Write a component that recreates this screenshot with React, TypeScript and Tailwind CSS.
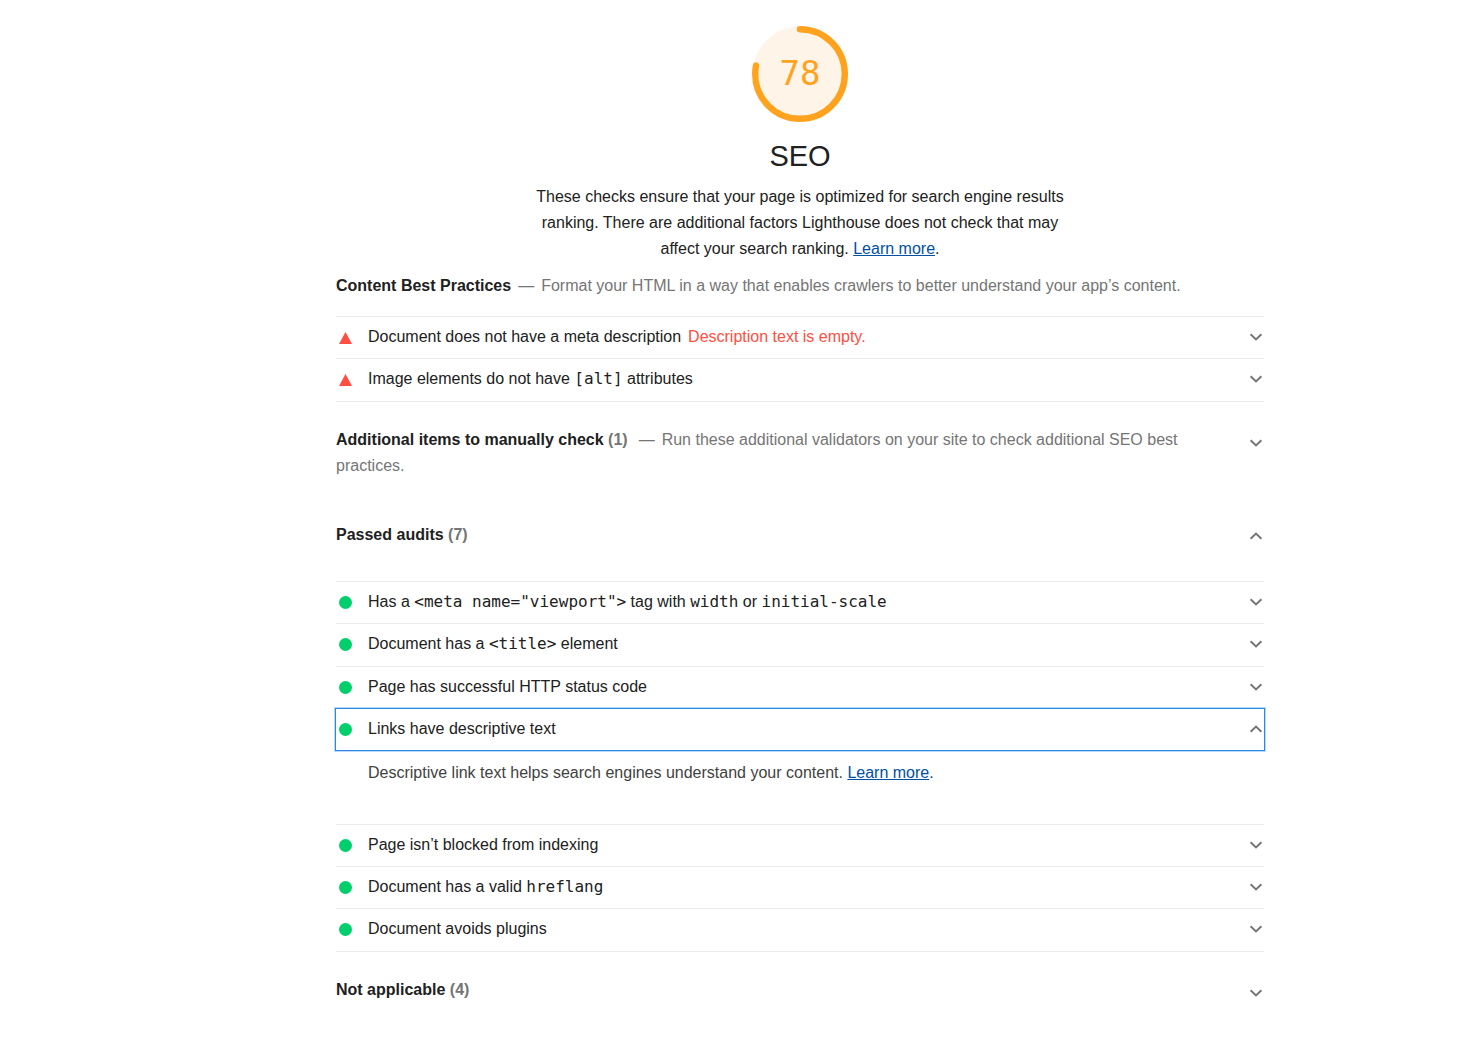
import { useState, type ReactNode } from "react";

function Chevron({ up }: { up: boolean }) {
  return (
    <svg
      viewBox="0 0 14 10"
      className={`h-[10px] w-[14px] shrink-0 ${up ? "rotate-180" : ""}`}
      fill="none"
      stroke="#757575"
      strokeWidth="2"
      aria-hidden="true"
    >
      <path d="M1.6 2.2 L7 7.4 L12.4 2.2" />
    </svg>
  );
}

function StatusMark({ pass }: { pass: boolean }) {
  return pass ? (
    <span className="ml-[3px] mr-4 mt-px size-[13px] shrink-0 rounded-full bg-[#00cf6b]" />
  ) : (
    <svg viewBox="0 0 13 12" className="ml-[3px] mr-4 mt-[2px] h-3 w-[13px] shrink-0" aria-hidden="true">
      <path d="M6.5 0 L13 12 L0 12 Z" fill="#ff4e42" />
    </svg>
  );
}

function Code({ children }: { children: ReactNode }) {
  return <code className="font-['DejaVu_Sans_Mono',monospace] text-base leading-none">{children}</code>;
}

function LearnMore() {
  return (
    <a href="#learn-more" className="text-[#0050a4] underline">
      Learn more
    </a>
  );
}

type AuditProps = {
  title: ReactNode;
  pass?: boolean;
  note?: string;
  tall?: boolean;
  selected?: boolean;
  details?: ReactNode;
};

function Audit({ title, pass = false, note, tall = false, selected = false, details }: AuditProps) {
  const [open, setOpen] = useState(selected);
  return (
    <li className="border-t border-[#ebebeb] last:border-b">
      <button
        type="button"
        aria-expanded={open}
        onClick={() => setOpen(!open)}
        className={`flex w-full items-center pb-[2px] pr-px text-left ${tall ? "min-h-[42px]" : "min-h-[41px]"} ${
          selected ? "shadow-[0_0_0_2px_#b9d9fb] outline outline-[#2b87e8]" : ""
        }`}
      >
        <StatusMark pass={pass} />
        <span className="flex-1">
          {title}
          {note && <span className="ml-[7px] text-[#ff4e42]">{note}</span>}
        </span>
        <Chevron up={open} />
      </button>
      {open && details && <p className="pb-[38px] pl-8 pt-[10px] text-[#424242]">{details}</p>}
    </li>
  );
}

type ClumpProps = { title: string; count: number; description?: string; open?: boolean };

function ClumpHeader({ title, count, description, open = false }: ClumpProps) {
  return (
    <button type="button" aria-expanded={open} className="flex w-full items-start justify-between pr-px text-left">
      <span className="max-w-[860px]">
        <b>{title}</b> <b className="text-[#757575]">({count})</b>
        {description && (
          <span className="text-[#757575]">
            <span className="ml-[11px] mr-[7px]">—</span>
            {description}
          </span>
        )}
      </span>
      <span className={`flex ${open ? "mt-[9px]" : "mt-[11px]"}`}>
        <Chevron up={open} />
      </span>
    </button>
  );
}

function Gauge({ score }: { score: number }) {
  return (
    <div className="grid size-24 place-items-center" role="img" aria-label={`SEO score ${score}`}>
      <svg viewBox="0 0 96 96" className="col-start-1 row-start-1 size-24">
        <circle cx="48" cy="48" r="47.5" fill="#fff4e8" />
        <circle
          cx="48"
          cy="48"
          r="44.8"
          fill="none"
          stroke="#ffa31f"
          strokeWidth="6.4"
          strokeLinecap="round"
          pathLength="100"
          strokeDasharray={`${score} 100`}
          transform="rotate(-90 48 48)"
        />
      </svg>
      <span className="col-start-1 row-start-1 pb-[2px] font-['DejaVu_Sans_Mono',monospace] text-[34px] leading-10 text-[#ffa31f]">
        {score}
      </span>
    </div>
  );
}

export default function App() {
  return (
    <div className="min-h-screen bg-white pl-[126px] font-['Liberation_Sans',Arial,sans-serif] text-base leading-[26px] text-[#212121]">
      <main className="mx-auto max-w-[928px] pb-12 pt-[26px]">
        <header className="flex flex-col items-center">
          <Gauge score={78} />
          <h1 className="mt-3 text-[29px] leading-[44px]">SEO</h1>
          <p className="mt-[6px] max-w-[540px] text-center">
            These checks ensure that your page is optimized for search engine results ranking. There are additional
            factors Lighthouse does not check that may affect your search ranking. <LearnMore />.
          </p>
        </header>

        <section className="mt-[11px]">
          <h2>
            <b>Content Best Practices</b>
            <span className="text-[#757575]">
              <span className="mx-[7px]">—</span>
              Format your HTML in a way that enables crawlers to better understand your app’s content.
            </span>
          </h2>
          <ul className="mt-[17px]">
            <Audit title="Document does not have a meta description" note="Description text is empty." />
            <Audit
              tall
              title={
                <>
                  Image elements do not have <Code>[alt]</Code> attributes
                </>
              }
            />
          </ul>
        </section>

        <section className="mt-[25px]">
          <ClumpHeader
            title="Additional items to manually check"
            count={1}
            description="Run these additional validators on your site to check additional SEO best practices."
          />
        </section>

        <section className="mt-[43px]">
          <ClumpHeader title="Passed audits" count={7} open />
          <ul className="mt-[33px]">
            <Audit
              pass
              title={
                <>
                  Has a <Code>{'<meta name="viewport">'}</Code> tag with <Code>width</Code> or{" "}
                  <Code>initial-scale</Code>
                </>
              }
            />
            <Audit
              pass
              tall
              title={
                <>
                  Document has a <Code>{"<title>"}</Code> element
                </>
              }
            />
            <Audit pass title="Page has successful HTTP status code" />
            <Audit
              pass
              selected
              title="Links have descriptive text"
              details={
                <>
                  Descriptive link text helps search engines understand your content. <LearnMore />.
                </>
              }
            />
            <Audit pass title="Page isn’t blocked from indexing" />
            <Audit
              pass
              title={
                <>
                  Document has a valid <Code>hreflang</Code>
                </>
              }
            />
            <Audit pass tall title="Document avoids plugins" />
          </ul>
        </section>

        <section className="mt-[25px]">
          <ClumpHeader title="Not applicable" count={4} />
        </section>
      </main>
    </div>
  );
}
